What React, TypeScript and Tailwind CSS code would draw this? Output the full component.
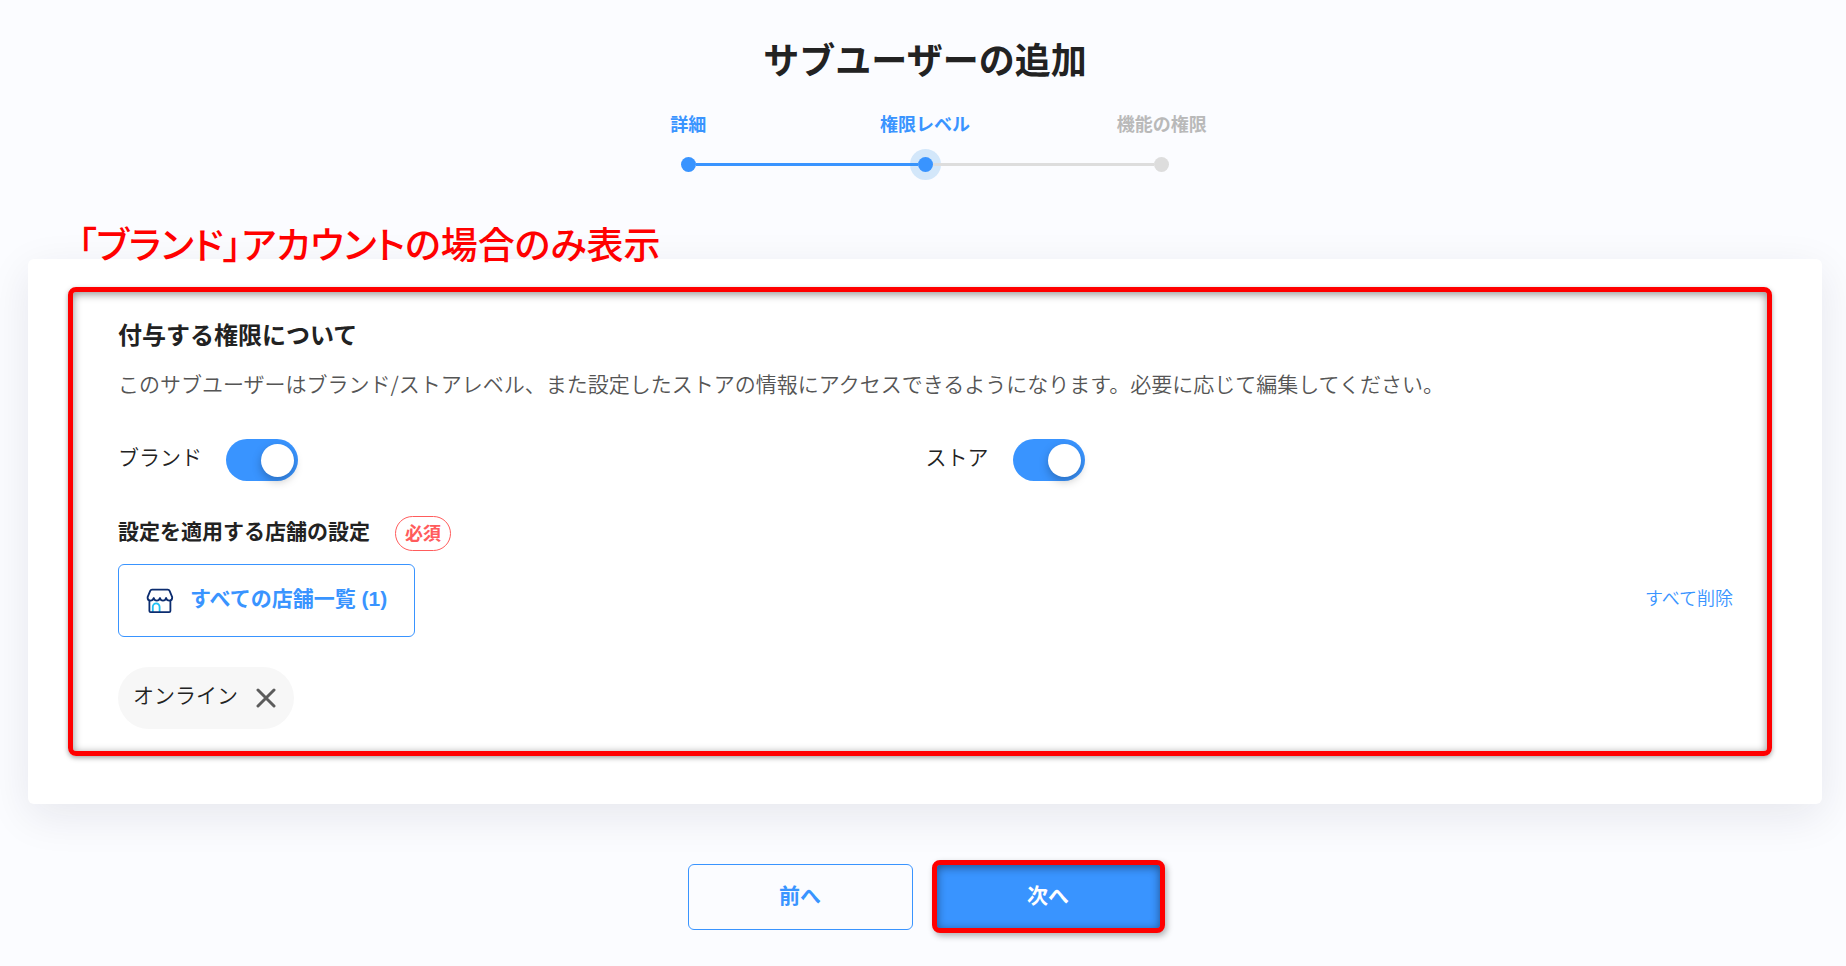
import { useState } from "react";

const steps = [
  { label: "詳細", state: "done" },
  { label: "権限レベル", state: "current" },
  { label: "機能の権限", state: "todo" },
];

function Stepper() {
  return (
    <ol className="mx-auto mt-[26px] grid w-[710px] max-w-full grid-cols-3 text-[18px] leading-[26px] font-bold">
      {steps.map((step, i) => (
        <li
          key={step.label}
          aria-current={step.state === "current" ? "step" : undefined}
          className={`flex flex-col items-center gap-[13px] ${step.state === "todo" ? "text-[#b9b9b9]" : "text-[#3994ff]"}`}
        >
          <span>{step.label}</span>
          <span className="flex h-[30px] w-full items-center">
            <span
              className={`h-[3px] flex-1 ${i === 0 ? "bg-transparent" : i === 1 ? "bg-[#3994ff]" : "bg-[#dddddd]"}`}
            />
            <span
              className={`size-[15px] rounded-full ${step.state === "todo" ? "bg-[#dddddd]" : "bg-[#3994ff]"} ${step.state === "current" ? "shadow-[0_0_0_8px_rgba(57,148,230,0.2)]" : ""}`}
            />
            <span
              className={`h-[3px] flex-1 ${i === 2 ? "bg-transparent" : i === 0 ? "bg-[#3994ff]" : "bg-[#dddddd]"}`}
            />
          </span>
        </li>
      ))}
    </ol>
  );
}

function Toggle({ id, label }: { id: string; label: string }) {
  const [on, setOn] = useState(true);
  return (
    <div className="flex items-center gap-6">
      <label htmlFor={id} className="pb-2 text-[21px] leading-[26px] font-[350] text-[#222]">
        {label}
      </label>
      <input
        id={id}
        type="checkbox"
        role="switch"
        checked={on}
        onChange={(e) => setOn(e.target.checked)}
        className="flex h-[42px] w-[72px] cursor-pointer appearance-none items-center rounded-full bg-[#c8c8c8] px-1 before:size-[33px] before:rounded-full before:bg-white before:shadow-[0_4px_10px_rgba(0,0,0,0.25)] before:content-[''] checked:justify-end checked:bg-[#3994ff]"
      />
    </div>
  );
}

function StoreIcon() {
  return (
    <svg viewBox="0 0 28 26" className="h-[26px] w-7" fill="none" strokeWidth="1.8" strokeLinecap="round" strokeLinejoin="round" aria-hidden="true">
      <path d="M6.800 23.500v-4.800a3.400 3.400 0 0 1 6.800 0v4.800" stroke="#1fc0f5" />
      <path
        d="M3.400 12.800V23q0 1.200 1.200 1.200H23.200q1.200 0 1.200-1.200V12.800M6 1.700H21.800q1.300 0 1.800 1.200L26.200 9.200q.2 3.200-2.800 3.400-2.700 0-3.300-2.600-.7 2.600-3.100 2.600T13.900 10q-.7 2.600-3.100 2.600T7.700 10Q7 12.600 4.400 12.600 1.400 12.400 1.600 9.200L4.200 2.900Q4.700 1.700 6 1.700Z"
        stroke="#0b2c6f"
      />
    </svg>
  );
}

export default function App() {
  return (
    <main className="min-h-screen bg-[#fbfcff] pt-8 pr-6 pb-8 pl-7 font-['Noto_Sans_CJK_JP',sans-serif] text-[#222]">
      <h1 className="text-center text-[36px] leading-[52px] font-bold">サブユーザーの追加</h1>
      <Stepper />

      <p className="mt-12 pl-[50px] text-[37px] leading-8 font-medium text-[#f00] [font-feature-settings:'palt']">
        「ブランド」アカウントの場合のみ表示
      </p>

      <section className="rounded-md bg-white pt-7 pr-[50px] pb-12 pl-10 shadow-[0_12px_44px_rgba(20,20,60,0.09)]">
        <div className="rounded-lg border-5 border-[#f00] pt-6 pr-[34px] pb-[22px] pl-[45px] shadow-[0_2px_5px_rgba(0,0,0,0.35),inset_0_2px_8px_rgba(0,0,0,0.45)]">
          <h2 className="text-[24px] leading-[36px] font-bold">付与する権限について</h2>
          <p className="mt-[15px] text-[21px] leading-[32px] font-[350] text-[#555]">
            このサブユーザーはブランド/ストアレベル、また設定したストアの情報にアクセスできるようになります。必要に応じて編集してください。
          </p>

          <div className="mt-10 grid grid-cols-2">
            <Toggle id="brand" label="ブランド" />
            <Toggle id="store" label="ストア" />
          </div>

          <div className="mt-[35px] flex items-center gap-[25px]">
            <h3 className="pb-2 text-[21px] leading-[26px] font-bold">設定を適用する店舗の設定</h3>
            <span className="flex h-[35px] items-center rounded-full border border-[#ff5c5c] px-[9px] pb-1 text-[18px] leading-[26px] font-bold text-[#ff5c5c]">
              必須
            </span>
          </div>

          <div className="mt-[13px] flex items-center justify-between">
            <button type="button" className="flex h-[73px] cursor-pointer items-center gap-4 rounded-md border border-[#3994ff] px-[27px] text-[21px] leading-[30px] font-bold text-[#3994ff]">
              <StoreIcon />
              <span className="pb-1 font-['Liberation_Sans','Noto_Sans_CJK_JP',sans-serif]">すべての店舗一覧 (1)</span>
            </button>
            <button type="button" className="cursor-pointer pb-2 text-[18px] leading-[26px] font-[350] text-[#3994ff]">
              すべて削除
            </button>
          </div>

          <ul className="mt-[30px] flex">
            <li className="flex h-[62px] items-center gap-[18px] rounded-full bg-[#f7f7f7] pr-[18px] pl-[15px]">
              <span className="pb-2 text-[21px] leading-[26px] font-[350] text-[#222]">オンライン</span>
              <button type="button" aria-label="オンラインを削除" className="cursor-pointer">
                <svg viewBox="0 0 20 20" className="size-5" fill="none" stroke="#5c5c5c" strokeWidth="3" strokeLinecap="round" aria-hidden="true">
                  <path d="M2 2 18 18M18 2 2 18" />
                </svg>
              </button>
            </li>
          </ul>
        </div>
      </section>

      <div className="mt-14 flex items-center justify-center gap-[19px] pl-0.5 text-[21px] leading-[30px] font-bold">
        <button type="button" className="h-[66px] w-[225px] cursor-pointer rounded-md border border-[#3994ff] pb-1.5 text-[#3994ff]">
          前へ
        </button>
        <button type="button" className="h-[73px] w-[233px] cursor-pointer rounded-lg border-5 border-[#f00] bg-[#3994ff] pb-1.5 text-white shadow-[2px_3px_6px_rgba(0,0,0,0.3),inset_0_2px_10px_rgba(0,0,0,0.45)]">
          次へ
        </button>
      </div>
    </main>
  );
}
